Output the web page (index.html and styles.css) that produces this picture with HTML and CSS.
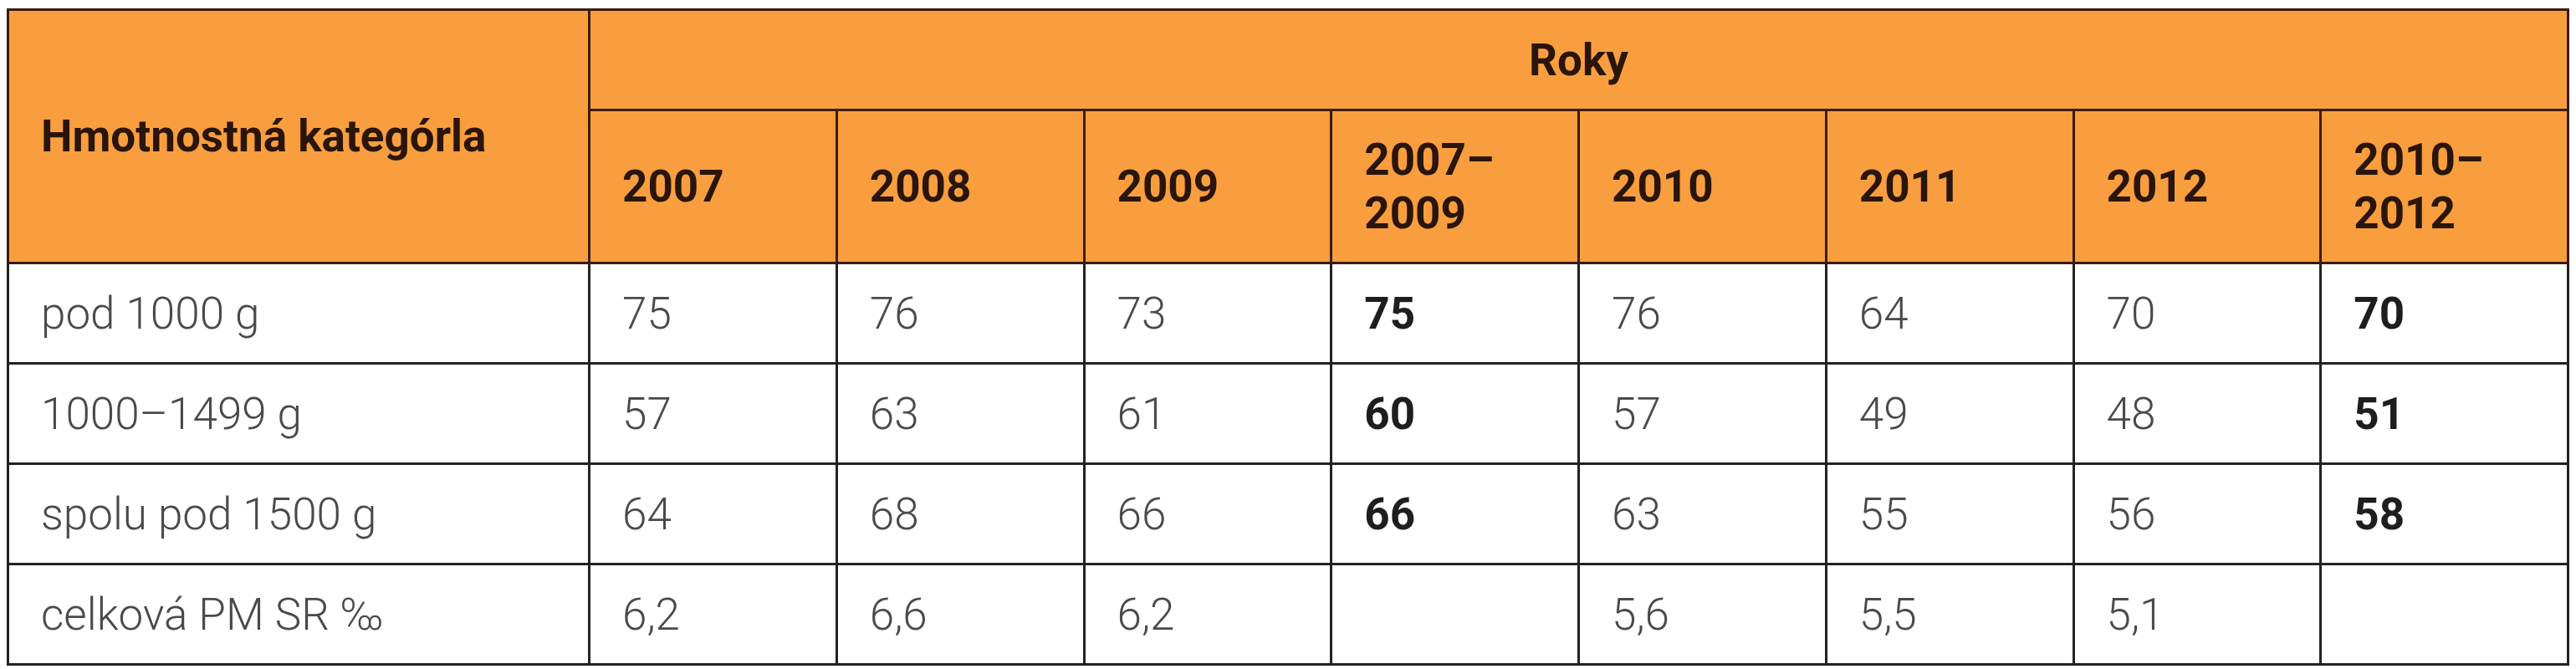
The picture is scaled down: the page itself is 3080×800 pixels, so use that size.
FILE: index.html
```html
<!DOCTYPE html>
<html lang="sk">
<head>
<meta charset="utf-8">
<title>Hmotnostná kategória</title>
<link rel="stylesheet" href="styles.css">
</head>
<body>
<table class="data-table">
  <colgroup>
    <col class="col-cat">
    <col><col><col><col><col><col><col><col>
  </colgroup>
  <thead>
    <tr class="head-row-1">
      <th class="cat-head" rowspan="2">Hmotnostná kategórla</th>
      <th class="years-head" colspan="8">Roky</th>
    </tr>
    <tr class="head-row-2">
      <th>2007</th>
      <th>2008</th>
      <th>2009</th>
      <th>2007–<br>2009</th>
      <th>2010</th>
      <th>2011</th>
      <th>2012</th>
      <th>2010–<br>2012</th>
    </tr>
  </thead>
  <tbody>
    <tr>
      <td>pod 1000 g</td>
      <td>75</td><td>76</td><td>73</td><td class="strong">75</td>
      <td>76</td><td>64</td><td>70</td><td class="strong">70</td>
    </tr>
    <tr>
      <td>1000–1499 g</td>
      <td>57</td><td>63</td><td>61</td><td class="strong">60</td>
      <td>57</td><td>49</td><td>48</td><td class="strong">51</td>
    </tr>
    <tr>
      <td>spolu pod 1500 g</td>
      <td>64</td><td>68</td><td>66</td><td class="strong">66</td>
      <td>63</td><td>55</td><td>56</td><td class="strong">58</td>
    </tr>
    <tr>
      <td>celková PM SR ‰</td>
      <td>6,2</td><td>6,6</td><td>6,2</td><td class="strong"></td>
      <td>5,6</td><td>5,5</td><td>5,1</td><td class="strong"></td>
    </tr>
  </tbody>
</table>
</body>
</html>
```
FILE: styles.css
```css
html, body {
  background: #ffffff;
}

body {
  margin: 8px;
  font-family: Roboto, "Liberation Sans", sans-serif;
}

.data-table {
  width: 100%;
  margin-top: 2px;
  border-collapse: collapse;
  table-layout: fixed;
  font-size: 53px;
}

.col-cat {
  width: 695px;
}

.data-table th,
.data-table td {
  border: 3px solid #222222;
  padding: 0 0 0 38px;
  text-align: left;
  vertical-align: middle;
  line-height: 64px;
}

.data-table thead th {
  background: #f99e3e;
  color: #2a150a;
  font-weight: 700;
  border-color: #3a1c0c;
}

.head-row-1 {
  height: 120px;
}

.head-row-2 {
  height: 183px;
}

.data-table .years-head {
  text-align: center;
  padding: 0;
}

.data-table tbody tr {
  height: 120px;
}

.data-table td {
  color: #4a4a4a;
  font-weight: 300;
}

.data-table td.strong {
  color: #1e1e1e;
  font-weight: 700;
}
```
